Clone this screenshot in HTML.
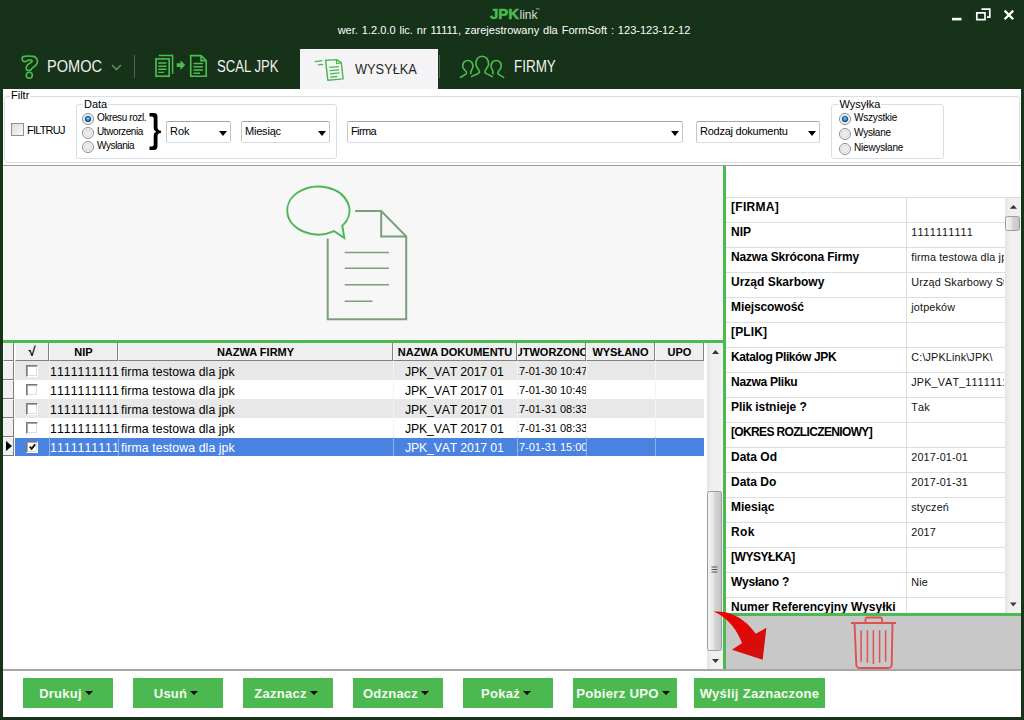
<!DOCTYPE html>
<html><head><meta charset="utf-8">
<style>
*{box-sizing:border-box;margin:0;padding:0}
html,body{width:1024px;height:720px;overflow:hidden}
body{position:relative;background:#163218;font-family:"Liberation Sans",sans-serif;color:#000}
.a{position:absolute;white-space:nowrap;line-height:1}
.tab{color:#f2f2f2;font-size:16px;transform-origin:0 0}
.fp{background:#fff}
.gb{position:absolute;border:1px solid #d5dfe5;border-radius:3px}
.lbl{position:absolute;font-size:11px;line-height:1;background:#fff;padding:0 1px;color:#000}
.rad{position:absolute;width:12px;height:12px;border-radius:50%;border:1px solid #8c8c8c;background:radial-gradient(circle at 50% 50%,#e4e4e6 0,#eef0f2 2.5px,#d9dadc 3.6px,#f6f6f6 4.2px,#fdfdfd 5px)}
.rad.on::after{content:"";position:absolute;left:2px;top:2px;width:6px;height:6px;border-radius:50%;background:radial-gradient(circle at 50% 45%,#7fd6ff 0,#2196dc 1.6px,#0f4f85 2.6px,#0b3358 3px)}
.rt{position:absolute;font-size:10px;line-height:1}
.cb{position:absolute;border:1px solid;border-color:#a4a4a4 #c6c6c6 #d8dde2 #c6c6c6;border-radius:2px;background:#fff;height:22px}
.cb span{position:absolute;left:3px;top:4px;font-size:11px;line-height:1}
.cb i{position:absolute;top:9px;width:0;height:0;border-left:4px solid transparent;border-right:4px solid transparent;border-top:5px solid #000}
.hd{position:absolute;top:343px;height:18px;background:#efefef;border-right:1px solid #808080;border-bottom:1px solid #808080;border-left:1px solid #fcfcfc;font-weight:bold;font-size:11px;text-align:center;line-height:1}
.hd span{position:absolute;left:0;right:0;top:4px}
.row{position:absolute;left:3px;width:701px;height:19px}
.cell{position:absolute;top:0;height:19px;font-size:12.3px;line-height:1;font-kerning:none;overflow:hidden}
.cell span{position:absolute;top:4.5px}
.prow{position:absolute;left:726px;width:279px;height:25px;border-bottom:1px solid #e3e3e3}
.pn{position:absolute;left:5px;top:3px;font-weight:bold;font-size:12px;line-height:1;white-space:nowrap}
.pv{position:absolute;left:185.3px;top:4px;width:93px;overflow:hidden;font-size:10.8px;line-height:1;white-space:nowrap;font-kerning:none;color:#111;letter-spacing:0.15px}
.pdiv{position:absolute;left:179.5px;top:-1px;width:1px;height:25px;background:#dedede}
.btn{position:absolute;top:678px;height:30px;background:#4cb950;color:#f4fbef;font-weight:bold;font-size:13px;line-height:1;letter-spacing:0.25px}
.btn span{position:absolute;top:8.7px;left:-4px;right:0;text-align:center}
.btn i{display:inline-block;width:0;height:0;border-left:4px solid transparent;border-right:4px solid transparent;border-top:4.8px solid #000;vertical-align:2.5px;margin-left:3px}
</style></head><body>

<!-- title bar -->
<div class="a" style="left:490px;top:5.9px;font-size:15px;font-weight:bold;color:#4cbb4f;-webkit-text-stroke:0.5px #4cbb4f">JPK</div>
<div class="a" style="left:519.5px;top:9.2px;font-size:12px;color:#dcdedc">link</div>
<div class="a" style="left:535.3px;top:7.6px;font-size:4.6px;color:#c8ccc8">™</div>
<div class="a" style="left:330px;top:24.7px;font-size:11.05px;word-spacing:0.8px;color:#fff;width:368px;text-align:center">wer. 1.2.0.0 lic. nr 11111, zarejestrowany dla FormSoft : 123-123-12-12</div>

<!-- tabs -->
<div class="a" style="left:300px;top:49px;width:138px;height:40px;background:#f4f4f6"></div>
<div class="a" style="left:134px;top:55px;width:1px;height:23px;background:#4f6650"></div>
<div class="a" style="left:439px;top:55px;width:1px;height:23px;background:#4f6650"></div>
<div class="a tab" style="left:46.8px;top:58.7px;font-size:15.6px;transform:scaleX(0.933)">POMOC</div>
<div class="a tab" style="left:216.8px;top:58.7px;font-size:15.6px;transform:scaleX(0.841)">SCAL JPK</div>
<div class="a tab" style="left:354.5px;top:61.2px;font-size:15px;transform:scaleX(0.853);color:#1f2a20">WYSYŁKA</div>
<div class="a tab" style="left:513.8px;top:58.7px;font-size:15.6px;transform:scaleX(0.862)">FIRMY</div>

<!-- filter panel -->
<div class="a fp" style="left:3px;top:89px;width:1018px;height:77px;border-bottom:1px solid #9c9ca0"></div>
<div class="gb" style="left:4px;top:96px;width:1016px;height:67px"></div>
<div class="lbl" style="left:10px;top:90.2px">Filtr</div>
<div class="a" style="left:11px;top:123px;width:13px;height:13px;border:1px solid #8f8f8f;background:linear-gradient(135deg,#dcdcdc,#fafafa)"></div>
<div class="a" style="left:27px;top:124.7px;font-size:11px;letter-spacing:-0.8px">FILTRUJ</div>

<div class="gb" style="left:76px;top:104px;width:261px;height:55px"></div>
<div class="lbl" style="left:83px;top:98.7px">Data</div>
<div class="rad on" style="left:82px;top:113px"></div>
<div class="rad" style="left:82px;top:127px"></div>
<div class="rad" style="left:82px;top:141px"></div>
<div class="rt" style="left:97px;top:112.5px;letter-spacing:-0.4px">Okresu rozl.</div>
<div class="rt" style="left:97px;top:126.5px;letter-spacing:-0.4px">Utworzenia</div>
<div class="rt" style="left:97px;top:140.5px;letter-spacing:-0.4px">Wysłania</div>

<div class="cb" style="left:166px;top:121px;width:65px"><span>Rok</span><i style="left:52px"></i></div>
<div class="cb" style="left:241px;top:121px;width:89px"><span style="letter-spacing:-0.2px">Miesiąc</span><i style="left:76px"></i></div>
<div class="cb" style="left:347px;top:121px;width:336px"><span style="letter-spacing:-0.6px">Firma</span><i style="left:323px"></i></div>
<div class="cb" style="left:696px;top:121px;width:124px"><span style="letter-spacing:-0.25px">Rodzaj dokumentu</span><i style="left:111px"></i></div>

<div class="gb" style="left:831px;top:104px;width:113px;height:55px"></div>
<div class="lbl" style="left:838.5px;top:98.7px">Wysyłka</div>
<div class="rad on" style="left:838.5px;top:112.5px"></div>
<div class="rad" style="left:838.5px;top:127.5px"></div>
<div class="rad" style="left:838.5px;top:142.5px"></div>
<div class="rt" style="left:854px;top:113px;letter-spacing:-0.2px">Wszystkie</div>
<div class="rt" style="left:854px;top:128px;letter-spacing:-0.2px">Wysłane</div>
<div class="rt" style="left:854px;top:143px;letter-spacing:-0.2px">Niewysłane</div>

<!-- main gray area -->
<div class="a" style="left:3px;top:166px;width:719px;height:174px;background:#f7f7f7"></div><div class="a" style="left:722px;top:166px;width:1px;height:174px;background:#fff"></div>
<div class="a" style="left:3px;top:340px;width:723px;height:3px;background:#4aba51"></div>
<div class="a" style="left:723px;top:166px;width:3px;height:503px;background:#4aba51"></div>

<!-- grid -->
<div class="a" style="left:3px;top:343px;width:720px;height:326px;background:#fff"></div>
<div class="hd" style="left:3px;width:11px"></div>
<div class="hd" style="left:15px;width:34px"><span style="font-size:13px;top:2px">√</span></div>
<div class="hd" style="left:49px;width:69px"><span>NIP</span></div>
<div class="hd" style="left:118px;width:275px"><span>NAZWA FIRMY</span></div>
<div class="hd" style="left:393px;width:124px"><span>NAZWA DOKUMENTU</span></div>
<div class="hd" style="left:517px;width:69px;overflow:hidden"><span style="left:-12px;right:-12px">UTWORZONO</span></div>
<div class="hd" style="left:586px;width:69px"><span>WYSŁANO</span></div>
<div class="hd" style="left:655px;width:49px"><span>UPO</span></div>

<div class="a" style="left:3px;top:361px;width:11px;height:19px;background:#f0f0f0;border-top:1px solid #fafafa;border-right:1px solid #7c7c7c;border-bottom:1px solid #7c7c7c"></div>
<div class="a" style="left:15px;top:361px;width:689px;height:19px;background:#e8e8e8"></div>
<div class="a" style="left:49px;top:361px;width:1px;height:19px;background:#f3f3f3"></div>
<div class="a" style="left:118px;top:361px;width:1px;height:19px;background:#f3f3f3"></div>
<div class="a" style="left:393px;top:361px;width:1px;height:19px;background:#f3f3f3"></div>
<div class="a" style="left:517px;top:361px;width:1px;height:19px;background:#f3f3f3"></div>
<div class="a" style="left:586px;top:361px;width:1px;height:19px;background:#f3f3f3"></div>
<div class="a" style="left:655px;top:361px;width:1px;height:19px;background:#f3f3f3"></div>
<div class="a" style="left:26px;top:365px;width:12px;height:12px;border:1px solid;border-color:#7a7a7a #fff #fff #7a7a7a;box-shadow:inset 1px 1px 0 #a6a6a6,inset -1px -1px 0 #dedede;background:#fff"></div>
<div class="a" style="left:50px;top:365.6px;font-size:12.3px;color:#000;font-kerning:none;letter-spacing:0.05px">1111111111</div>
<div class="a" style="left:121px;top:365.6px;font-size:12.3px;color:#000;font-kerning:none;letter-spacing:0.08px">firma testowa dla jpk</div>
<div class="a" style="left:405px;top:365.6px;font-size:12.3px;color:#000;font-kerning:none;letter-spacing:-0.17px">JPK_VAT 2017 01</div>
<div class="a" style="left:518px;width:68px;overflow:hidden;top:365.6px;font-size:12.3px;color:#000;font-kerning:none;font-size:11px;height:14px"><span style="position:relative;left:-17.4px">2017-01-30 10:47</span></div>
<div class="a" style="left:3px;top:380px;width:11px;height:19px;background:#f0f0f0;border-top:1px solid #fafafa;border-right:1px solid #7c7c7c;border-bottom:1px solid #7c7c7c"></div>
<div class="a" style="left:15px;top:380px;width:689px;height:19px;background:#ffffff"></div>
<div class="a" style="left:49px;top:380px;width:1px;height:19px;background:#f3f3f3"></div>
<div class="a" style="left:118px;top:380px;width:1px;height:19px;background:#f3f3f3"></div>
<div class="a" style="left:393px;top:380px;width:1px;height:19px;background:#f3f3f3"></div>
<div class="a" style="left:517px;top:380px;width:1px;height:19px;background:#f3f3f3"></div>
<div class="a" style="left:586px;top:380px;width:1px;height:19px;background:#f3f3f3"></div>
<div class="a" style="left:655px;top:380px;width:1px;height:19px;background:#f3f3f3"></div>
<div class="a" style="left:26px;top:384px;width:12px;height:12px;border:1px solid;border-color:#7a7a7a #fff #fff #7a7a7a;box-shadow:inset 1px 1px 0 #a6a6a6,inset -1px -1px 0 #dedede;background:#fff"></div>
<div class="a" style="left:50px;top:384.6px;font-size:12.3px;color:#000;font-kerning:none;letter-spacing:0.05px">1111111111</div>
<div class="a" style="left:121px;top:384.6px;font-size:12.3px;color:#000;font-kerning:none;letter-spacing:0.08px">firma testowa dla jpk</div>
<div class="a" style="left:405px;top:384.6px;font-size:12.3px;color:#000;font-kerning:none;letter-spacing:-0.17px">JPK_VAT 2017 01</div>
<div class="a" style="left:518px;width:68px;overflow:hidden;top:384.6px;font-size:12.3px;color:#000;font-kerning:none;font-size:11px;height:14px"><span style="position:relative;left:-17.4px">2017-01-30 10:49</span></div>
<div class="a" style="left:3px;top:399px;width:11px;height:19px;background:#f0f0f0;border-top:1px solid #fafafa;border-right:1px solid #7c7c7c;border-bottom:1px solid #7c7c7c"></div>
<div class="a" style="left:15px;top:399px;width:689px;height:19px;background:#e8e8e8"></div>
<div class="a" style="left:49px;top:399px;width:1px;height:19px;background:#f3f3f3"></div>
<div class="a" style="left:118px;top:399px;width:1px;height:19px;background:#f3f3f3"></div>
<div class="a" style="left:393px;top:399px;width:1px;height:19px;background:#f3f3f3"></div>
<div class="a" style="left:517px;top:399px;width:1px;height:19px;background:#f3f3f3"></div>
<div class="a" style="left:586px;top:399px;width:1px;height:19px;background:#f3f3f3"></div>
<div class="a" style="left:655px;top:399px;width:1px;height:19px;background:#f3f3f3"></div>
<div class="a" style="left:26px;top:403px;width:12px;height:12px;border:1px solid;border-color:#7a7a7a #fff #fff #7a7a7a;box-shadow:inset 1px 1px 0 #a6a6a6,inset -1px -1px 0 #dedede;background:#fff"></div>
<div class="a" style="left:50px;top:403.6px;font-size:12.3px;color:#000;font-kerning:none;letter-spacing:0.05px">1111111111</div>
<div class="a" style="left:121px;top:403.6px;font-size:12.3px;color:#000;font-kerning:none;letter-spacing:0.08px">firma testowa dla jpk</div>
<div class="a" style="left:405px;top:403.6px;font-size:12.3px;color:#000;font-kerning:none;letter-spacing:-0.17px">JPK_VAT 2017 01</div>
<div class="a" style="left:518px;width:68px;overflow:hidden;top:403.6px;font-size:12.3px;color:#000;font-kerning:none;font-size:11px;height:14px"><span style="position:relative;left:-17.4px">2017-01-31 08:33</span></div>
<div class="a" style="left:3px;top:418px;width:11px;height:19px;background:#f0f0f0;border-top:1px solid #fafafa;border-right:1px solid #7c7c7c;border-bottom:1px solid #7c7c7c"></div>
<div class="a" style="left:15px;top:418px;width:689px;height:19px;background:#ffffff"></div>
<div class="a" style="left:49px;top:418px;width:1px;height:19px;background:#f3f3f3"></div>
<div class="a" style="left:118px;top:418px;width:1px;height:19px;background:#f3f3f3"></div>
<div class="a" style="left:393px;top:418px;width:1px;height:19px;background:#f3f3f3"></div>
<div class="a" style="left:517px;top:418px;width:1px;height:19px;background:#f3f3f3"></div>
<div class="a" style="left:586px;top:418px;width:1px;height:19px;background:#f3f3f3"></div>
<div class="a" style="left:655px;top:418px;width:1px;height:19px;background:#f3f3f3"></div>
<div class="a" style="left:26px;top:422px;width:12px;height:12px;border:1px solid;border-color:#7a7a7a #fff #fff #7a7a7a;box-shadow:inset 1px 1px 0 #a6a6a6,inset -1px -1px 0 #dedede;background:#fff"></div>
<div class="a" style="left:50px;top:422.6px;font-size:12.3px;color:#000;font-kerning:none;letter-spacing:0.05px">1111111111</div>
<div class="a" style="left:121px;top:422.6px;font-size:12.3px;color:#000;font-kerning:none;letter-spacing:0.08px">firma testowa dla jpk</div>
<div class="a" style="left:405px;top:422.6px;font-size:12.3px;color:#000;font-kerning:none;letter-spacing:-0.17px">JPK_VAT 2017 01</div>
<div class="a" style="left:518px;width:68px;overflow:hidden;top:422.6px;font-size:12.3px;color:#000;font-kerning:none;font-size:11px;height:14px"><span style="position:relative;left:-17.4px">2017-01-31 08:33</span></div>
<div class="a" style="left:3px;top:437px;width:11px;height:19px;background:#f0f0f0;border-top:1px solid #fafafa;border-right:1px solid #7c7c7c;border-bottom:1px solid #7c7c7c"></div>
<div class="a" style="left:6px;top:441px;width:0;height:0;border-top:5.5px solid transparent;border-bottom:5.5px solid transparent;border-left:6px solid #000"></div>
<div class="a" style="left:15px;top:438px;width:689px;height:18px;background:#4983df"></div>
<div class="a" style="left:49px;top:437px;width:1px;height:19px;background:#8fb2ea"></div>
<div class="a" style="left:118px;top:437px;width:1px;height:19px;background:#8fb2ea"></div>
<div class="a" style="left:393px;top:437px;width:1px;height:19px;background:#8fb2ea"></div>
<div class="a" style="left:517px;top:437px;width:1px;height:19px;background:#8fb2ea"></div>
<div class="a" style="left:586px;top:437px;width:1px;height:19px;background:#8fb2ea"></div>
<div class="a" style="left:655px;top:437px;width:1px;height:19px;background:#8fb2ea"></div>
<div class="a" style="left:26px;top:441px;width:12px;height:12px;border:1px solid;border-color:#7a7a7a #fff #fff #7a7a7a;box-shadow:inset 1px 1px 0 #a6a6a6,inset -1px -1px 0 #dedede;background:#fff"></div>
<svg class="a" style="left:26px;top:441px" width="12" height="12"><path d="M3.8 5.6 L5.6 7.8 L9.2 3.4" stroke="#000" stroke-width="1.7" fill="none"/></svg>
<div class="a" style="left:50px;top:441.6px;font-size:12.3px;color:#fff;font-kerning:none;letter-spacing:0.05px">1111111111</div>
<div class="a" style="left:121px;top:441.6px;font-size:12.3px;color:#fff;font-kerning:none;letter-spacing:0.08px">firma testowa dla jpk</div>
<div class="a" style="left:405px;top:441.6px;font-size:12.3px;color:#fff;font-kerning:none;letter-spacing:-0.17px">JPK_VAT 2017 01</div>
<div class="a" style="left:518px;width:68px;overflow:hidden;top:441.6px;font-size:12.3px;color:#fff;font-kerning:none;font-size:11px;height:14px"><span style="position:relative;left:-17.4px">2017-01-31 15:00</span></div>

<!-- grid scrollbar -->
<div class="a" style="left:707px;top:343px;width:16px;height:326px;background:linear-gradient(90deg,#e4e4e4,#f0f0f0 30%,#f1f1f1)"></div>

<!-- property panel -->
<div class="a" style="left:726px;top:166px;width:295px;height:447px;background:#fff"></div>
<div class="a" style="left:726px;top:197px;width:279px;height:416px;overflow:hidden">
<div class="a" style="left:0;top:0px;width:279px;height:25px;border-top:1px solid #dedede"><div class="pn" style="letter-spacing:0.3px">[FIRMA]</div><div class="pdiv"></div><div class="pv"></div></div>
<div class="a" style="left:0;top:25px;width:279px;height:25px;border-top:1px solid #dedede"><div class="pn" style="letter-spacing:0px">NIP</div><div class="pdiv"></div><div class="pv">1111111111</div></div>
<div class="a" style="left:0;top:50px;width:279px;height:25px;border-top:1px solid #dedede"><div class="pn" style="letter-spacing:-0.17px">Nazwa Skrócona Firmy</div><div class="pdiv"></div><div class="pv">firma testowa dla jpk</div></div>
<div class="a" style="left:0;top:75px;width:279px;height:25px;border-top:1px solid #dedede"><div class="pn" style="letter-spacing:0px">Urząd Skarbowy</div><div class="pdiv"></div><div class="pv">Urząd Skarbowy Stalowa</div></div>
<div class="a" style="left:0;top:100px;width:279px;height:25px;border-top:1px solid #dedede"><div class="pn" style="letter-spacing:-0.1px">Miejscowość</div><div class="pdiv"></div><div class="pv">jotpeków</div></div>
<div class="a" style="left:0;top:125px;width:279px;height:25px;border-top:1px solid #dedede"><div class="pn" style="letter-spacing:0.14px">[PLIK]</div><div class="pdiv"></div><div class="pv"></div></div>
<div class="a" style="left:0;top:150px;width:279px;height:25px;border-top:1px solid #dedede"><div class="pn" style="letter-spacing:-0.38px">Katalog Plików JPK</div><div class="pdiv"></div><div class="pv">C:\JPKLink\JPK\</div></div>
<div class="a" style="left:0;top:175px;width:279px;height:25px;border-top:1px solid #dedede"><div class="pn" style="letter-spacing:-0.27px">Nazwa Pliku</div><div class="pdiv"></div><div class="pv">JPK_VAT_1111111111</div></div>
<div class="a" style="left:0;top:200px;width:279px;height:25px;border-top:1px solid #dedede"><div class="pn" style="letter-spacing:-0.07px">Plik istnieje ?</div><div class="pdiv"></div><div class="pv">Tak</div></div>
<div class="a" style="left:0;top:225px;width:279px;height:25px;border-top:1px solid #dedede"><div class="pn" style="letter-spacing:-0.65px">[OKRES ROZLICZENIOWY]</div><div class="pdiv"></div><div class="pv"></div></div>
<div class="a" style="left:0;top:250px;width:279px;height:25px;border-top:1px solid #dedede"><div class="pn" style="letter-spacing:0px">Data Od</div><div class="pdiv"></div><div class="pv">2017-01-01</div></div>
<div class="a" style="left:0;top:275px;width:279px;height:25px;border-top:1px solid #dedede"><div class="pn" style="letter-spacing:0px">Data Do</div><div class="pdiv"></div><div class="pv">2017-01-31</div></div>
<div class="a" style="left:0;top:300px;width:279px;height:25px;border-top:1px solid #dedede"><div class="pn" style="letter-spacing:0px">Miesiąc</div><div class="pdiv"></div><div class="pv">styczeń</div></div>
<div class="a" style="left:0;top:325px;width:279px;height:25px;border-top:1px solid #dedede"><div class="pn" style="letter-spacing:0.4px">Rok</div><div class="pdiv"></div><div class="pv">2017</div></div>
<div class="a" style="left:0;top:350px;width:279px;height:25px;border-top:1px solid #dedede"><div class="pn" style="letter-spacing:-0.46px">[WYSYŁKA]</div><div class="pdiv"></div><div class="pv"></div></div>
<div class="a" style="left:0;top:375px;width:279px;height:25px;border-top:1px solid #dedede"><div class="pn" style="letter-spacing:-0.17px">Wysłano ?</div><div class="pdiv"></div><div class="pv">Nie</div></div>
<div class="a" style="left:0;top:400px;width:279px;height:25px;border-top:1px solid #dedede"><div class="pn" style="letter-spacing:0px">Numer Referencyjny Wysyłki</div><div class="pdiv"></div><div class="pv"></div></div>
</div>
<div class="a" style="left:726px;top:197px;width:295px;height:1px;background:#dcdcdc"></div><div class="a" style="left:1005px;top:198px;width:16px;height:415px;background:linear-gradient(90deg,#e4e4e4,#f0f0f0 30%,#f1f1f1)"></div>

<!-- trash area -->
<div class="a" style="left:726px;top:613px;width:295px;height:3px;background:#4aba51"></div>
<div class="a" style="left:726px;top:616px;width:295px;height:53px;background:#c8c8c8"></div>

<!-- bottom bar -->
<div class="a" style="left:3px;top:669px;width:1018px;height:2px;background:#a6a6a6"></div>
<div class="a" style="left:3px;top:671px;width:1018px;height:46px;background:#fff"></div>
<div class="btn" style="left:23px;width:90px"><span>Drukuj<i></i></span></div>
<div class="btn" style="left:133px;width:90px"><span>Usuń<i></i></span></div>
<div class="btn" style="left:243px;width:90px"><span>Zaznacz<i></i></span></div>
<div class="btn" style="left:353px;width:90px"><span>Odznacz<i></i></span></div>
<div class="btn" style="left:463px;width:90px"><span>Pokaż<i></i></span></div>
<div class="btn" style="left:573px;width:104px"><span style="font-size:13.2px;left:-4px">Pobierz UPO<i></i></span></div>
<div class="btn" style="left:694px;width:131px"><span style="font-size:13.1px;top:8.7px;left:0px">Wyślij Zaznaczone</span></div>

<!-- overlay svg -->
<svg class="a" style="left:0;top:0" width="1024" height="720" viewBox="0 0 1024 720">
<!-- window controls -->
<rect x="952" y="17.8" width="9.5" height="2.6" fill="#fff"/>
<path d="M981.5,9.2 H989.8 V17.2 H987 M976.8,12.8 H985 V19.6 H976.8 Z" stroke="#fff" stroke-width="1.7" fill="none"/>
<path d="M1004.6,10.6 L1013.2,19.2 M1013.2,10.6 L1004.6,19.2" stroke="#fff" stroke-width="2.3" fill="none"/>
<!-- ? icon -->
<path d="M22.25,57.42 C22.60,56.90 23.29,56.62 24.33,56.38 C25.38,56.13 26.97,55.96 28.50,55.96 C30.03,55.96 32.18,55.99 33.50,56.38 C34.82,56.76 35.76,57.45 36.42,58.25 C37.08,59.05 37.46,60.12 37.46,61.17 C37.46,62.21 37.08,63.53 36.42,64.50 C35.76,65.47 34.30,66.31 33.50,67.00 C32.70,67.69 32.08,68.17 31.62,68.67 C31.17,69.17 31.31,69.71 30.79,70.00 C30.27,70.29 29.19,70.44 28.50,70.42 C27.81,70.39 27.01,70.23 26.62,69.83 C26.24,69.44 26.10,68.79 26.21,68.04 C26.31,67.29 26.66,66.13 27.25,65.33 C27.84,64.53 28.95,63.86 29.75,63.25 C30.55,62.64 31.75,62.15 32.04,61.67 C32.33,61.18 32.02,60.60 31.50,60.33 C30.98,60.06 29.90,59.85 28.92,60.04 C27.93,60.24 26.52,61.30 25.58,61.50 C24.65,61.70 23.85,61.58 23.29,61.25 C22.74,60.92 22.42,60.14 22.25,59.50 C22.08,58.86 21.90,57.94 22.25,57.42 Z" stroke="#4cbe50" stroke-width="1.6" fill="none"/>
<circle cx="29.3" cy="75.2" r="3" stroke="#4cbe50" stroke-width="1.6" fill="none"/>
<path d="M112,65 L116.5,69.5 L121,65" stroke="#5e8f61" stroke-width="1.6" fill="none"/>
<!-- SCAL icon -->
<g stroke="#4cbe50" fill="none">
<path d="M158.8,55.6 H172.6 V73.7" stroke-width="1.5"/>
<rect x="156" y="58.9" width="13.2" height="17.3" stroke-width="1.65"/>
<path d="M158.2,63 H166.4 M158.2,66.3 H166.4 M158.2,69.3 H166.4 M158.2,72.4 H163.8" stroke-width="1.4"/>
<path d="M190.7,55.6 H201 L206.2,60.6 V76.2 H190.7 Z" stroke-width="1.65"/>
<path d="M201,55.6 V60.6 H206.2" stroke-width="1.6"/>
<path d="M193.5,63.5 H203 M193.5,66.8 H203 M193.5,70 H203 M193.5,73.3 H200" stroke-width="1.4"/>
</g>
<path d="M176.7,63.2 H180.5 V60.2 L185.2,65 L180.5,69.9 V67 H176.7 Z" fill="#4cbe50"/>
<!-- WYSYLKA icon -->
<g stroke="#49b84d" fill="none" stroke-linecap="round">
<path d="M325.6,60.2 L336.4,59.6 L341.3,62.7 L343.1,78.9 L327.8,80.2 Z" stroke-width="1.45" stroke-linejoin="round"/>
<path d="M336.4,59.6 L336.8,63.6 L341.3,62.9" stroke-width="1.3"/>
<path d="M329.8,67.3 L338.4,66.7 M330.2,70.7 L338.6,69.8 M330.4,73.8 L339,72.9 M330.8,77.1 L336.7,76.5" stroke-width="1.35"/>
<path d="M315.3,61.6 L321.8,60.6 M318.4,64.9 L322.7,64.4" stroke-width="1.35"/>
</g>
<!-- FIRMY icon -->
<g stroke="#4cbe50" fill="none" stroke-width="1.6" stroke-linecap="round" stroke-linejoin="round">
<path d="M471.6,76.6 C474.5,75 479.6,73.6 479.6,72 C479.6,70 476,67.2 475.9,64.5 C475.6,59.5 478.2,56.3 482.1,56.3 C486.2,56.3 488.8,59.5 488.6,64.5 C488.4,67.2 484.8,70 484.8,72 C484.8,73.6 490,75 492.3,76.6"/>
<path d="M460.4,77.4 C462.5,75.8 466.6,74.6 466.6,73 C466.6,71 463,69.4 462.8,66.6 C462.5,62.8 464.6,60.5 467.8,60.5 C471,60.5 473,62.8 472.9,66.6 C472.8,69.4 470,71 470.8,73.6"/>
<path d="M503.6,77.4 C501.5,75.8 497.8,74.6 497.8,73 C497.8,71 501,69.4 501.2,66.6 C501.5,62.8 499.4,60.5 496.2,60.5 C493,60.5 491,62.8 491.1,66.6 C491.2,69.4 494,71 492.9,73.6"/>
</g>
<!-- brace -->
<path d="M149.5,113 L154,113 Q157.5,113 157.5,117 L157.5,127.5 Q157.5,130.3 161,130.8 L161,132.8 Q157.5,133.4 157.5,136 L157.5,146 Q157.5,150 154,150 L149.5,150 L149.5,146.5 L152,146.5 Q153.7,146.5 153.7,144.5 L153.7,135.5 Q153.7,132.6 156.2,131.8 Q153.7,131 153.7,128 L153.7,118.5 Q153.7,116.5 152,116.5 L149.5,116.5 Z" fill="#000"/>
<!-- big doc icon -->
<path d="M342.3,225.8 A31.1,24 0 1 0 334.1,231.2 L344.3,238 Z" stroke="#4cb85a" stroke-width="2" fill="none" stroke-linejoin="miter"/>
<g stroke="#7a9e7e" stroke-width="2" fill="none">
<path d="M355.2,211 L381.2,211 L406.2,236.4 L406.2,319.3 L327.7,319.3 L327.7,238.5"/>
<path d="M381.2,211 L381.2,236.4 L406.2,236.4"/>
<path d="M344.7,252.5 H388.9 M344.7,268.3 H388.9 M344.7,284.7 H388.9 M344.7,301.3 H372.5" stroke-width="1.6"/>
</g>
<!-- grid scrollbar -->
<path d="M712,354 L715.5,350 L719,354 Z" fill="#333"/>
<rect x="707.5" y="491.5" width="14" height="159" rx="2" fill="url(#thv)" stroke="#9c9c9c"/>
<path d="M711.5,567 H717.5 M711.5,569.5 H717.5 M711.5,572 H717.5" stroke="#555" stroke-width="1"/>
<path d="M712,659 L719,659 L715.5,663 Z" fill="#3a3a3a"/>
<!-- property scrollbar -->
<path d="M1009.8,208.8 L1013.4,205 L1017,208.8 Z" fill="#333"/>
<rect x="1005.5" y="216.5" width="14" height="14" rx="2" fill="url(#thv)" stroke="#9c9c9c"/>
<path d="M1010,602.5 L1016.6,602.5 L1013.3,606.5 Z" fill="#3a3a3a"/>
<defs>
<linearGradient id="thv" x1="0" x2="1" y1="0" y2="0"><stop offset="0" stop-color="#f4f4f4"/><stop offset="0.45" stop-color="#e6e6e6"/><stop offset="0.5" stop-color="#d6d6d8"/><stop offset="1" stop-color="#c4c4c8"/></linearGradient>
<linearGradient id="redg" x1="0" x2="1" y1="0" y2="1"><stop offset="0" stop-color="#f00000"/><stop offset="1" stop-color="#d01010"/></linearGradient>
</defs>
<!-- trash -->
<g stroke="#e05050" fill="none">
<path d="M851,623 H896" stroke-width="2"/>
<path d="M865.5,623 V619.5 Q865.5,617.5 867.5,617.5 H880 Q882,617.5 882,619.5 V623" stroke-width="1.8"/>
<path d="M854.5,623 L856.3,664.5 Q856.5,668 860,668 H888 Q891.5,668 891.7,664.5 L892.5,623" stroke-width="1.9"/>
<path d="M861.1,630.2 V661.7 M867.4,630.2 V662.7 M873.4,630.2 V664 M879.6,630.2 V662.7 M885.6,630.2 V661.7" stroke-width="1.5"/>
</g>
<!-- red arrow -->
<path d="M713.5,611.6 C733,610 748,622 755.7,633.8 L766.4,627.8 L762.7,659.8 L732,649.8 L742,643.1 C738,632 728,617 713.5,611.6 Z" fill="url(#redg)"/>

</svg>
</body></html>
